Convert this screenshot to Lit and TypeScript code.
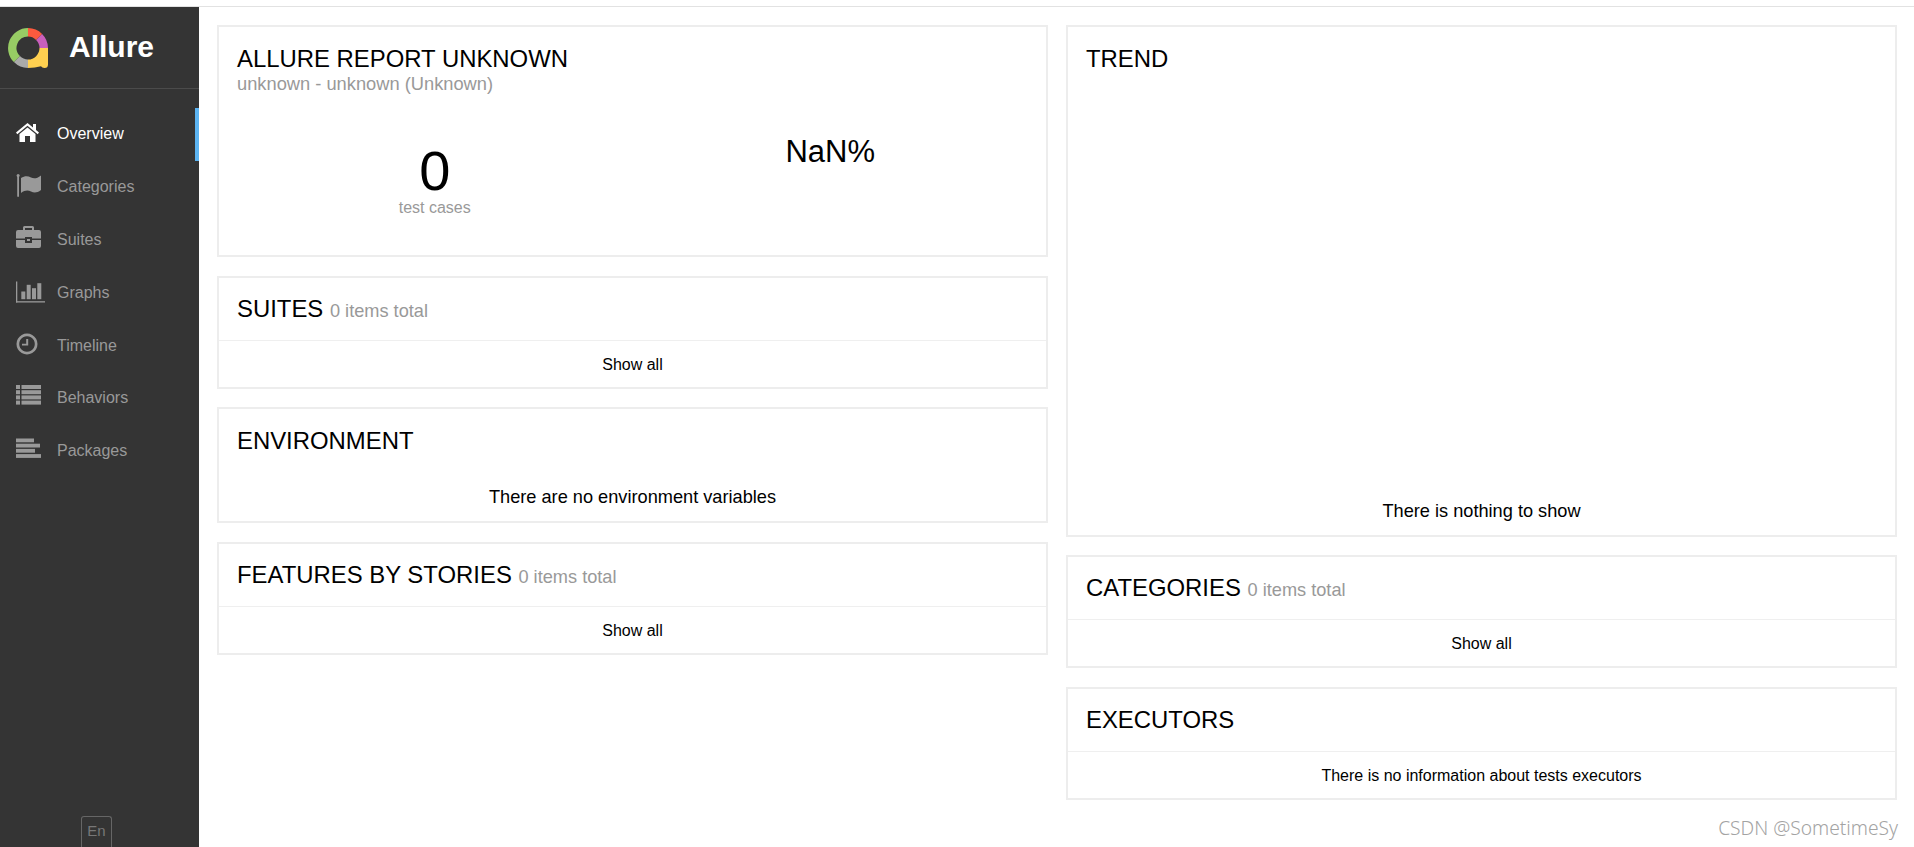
import { LitElement, html, css, svg } from "lit";
import { customElement } from "lit/decorators.js";

const icons: Record<string, unknown> = {
  home: svg`<path d="M11.500 3 L17 7.600 V4 H20 V10.100 L23 12.600 L21.700 14.200 L11.500 5.700 L1.300 14.200 L0 12.600 Z"/><path d="M11.500 7.500 L19.500 14 V22 H14 V16 H9 V22 H3.500 V14 Z"/>`,
  flag: svg`<rect x="1.200" y="2" width="1.800" height="22" rx="0.900"/><circle cx="2.100" cy="2.400" r="1.500"/><path d="M5 5 C9 2.500 12 3 15 4.500 C18 6 21 5.500 25 2.500 V17 C21 20 18 20 15 18.500 C12 17 9 17 5 20 Z"/>`,
  suitcase: svg`<path d="M7 4 V1.500 Q7 0 8.500 0 H16.500 Q18 0 18 1.500 V4 H16 V2 H9 V4 Z"/><path d="M2 4 H23 Q25 4 25 6 V12.500 H16 V11 H9 V12.500 H0 V6 Q0 4 2 4 Z"/><path d="M0 14 H9 V17 H16 V14 H25 V20 Q25 22 23 22 H2 Q0 22 0 20 Z"/><rect x="11" y="13" width="3" height="2"/>`,
  chart: svg`<rect x="0" y="2.500" width="1.300" height="21"/><rect x="0" y="22.200" width="29" height="1.300"/><rect x="5.300" y="12.500" width="4" height="7.700"/><rect x="10.700" y="5.800" width="4" height="14.400"/><rect x="16" y="9.200" width="4" height="11"/><rect x="21.300" y="4.200" width="4" height="16"/>`,
  clock: svg`<path fill-rule="evenodd" d="M11 1.500 A10.500 10.500 0 1 1 10.990 1.500 Z M11 4.200 A7.800 7.800 0 1 0 11.010 4.200 Z"/><path d="M10.200 7 H12.200 V13.600 H6 V11.800 H10.200 Z"/>`,
  list: svg`<rect x="0" y="1" width="4" height="4"/><rect x="5.500" y="1" width="19.500" height="4"/><rect x="0" y="6.200" width="4" height="4"/><rect x="5.500" y="6.200" width="19.500" height="4"/><rect x="0" y="11.400" width="4" height="4"/><rect x="5.500" y="11.400" width="19.500" height="4"/><rect x="0" y="16.600" width="4" height="4"/><rect x="5.500" y="16.600" width="19.500" height="4"/>`,
  align: svg`<rect x="0" y="1.500" width="18" height="3.800"/><rect x="0" y="6.700" width="24" height="3.800"/><rect x="0" y="11.900" width="19" height="3.800"/><rect x="0" y="17.100" width="25" height="3.800"/>`,
};

const nav = [
  ["home", "Overview"],
  ["flag", "Categories"],
  ["suitcase", "Suites"],
  ["chart", "Graphs"],
  ["clock", "Timeline"],
  ["list", "Behaviors"],
  ["align", "Packages"],
];

@customElement("app-root")
export class AppRoot extends LitElement {
  static styles = css`
    :host {
      display: block;
      height: 847px;
      overflow: hidden;
      position: relative;
      font-family: "Liberation Sans", Arial, sans-serif;
      background: #fff;
      color: #000;
    }
    .page {
      display: flex;
      height: 847px;
      box-sizing: border-box;
      padding-top: 6px;
    }
    .frame {
      display: flex;
      flex: 1;
      border-top: 1px solid #e2e2e2;
      min-width: 0;
    }
    .side {
      width: 199px;
      flex: none;
      background: #343434;
      display: flex;
      flex-direction: column;
      height: 840px;
    }
    .brand {
      height: 82px;
      box-sizing: border-box;
      border-bottom: 1px solid #4b4b4b;
      display: flex;
      align-items: center;
      padding-left: 8px;
      gap: 21px;
      color: #fff;
      font-size: 30px;
      font-weight: 700;
      flex: none;
    }
    .brand svg { display: block; }
    .brand span { padding-bottom: 2px; }
    .nav { padding-top: 19px; flex: 1; }
    .item {
      height: 52.800px;
      display: flex;
      align-items: center;
      color: #999;
      font-size: 16px;
      box-sizing: border-box;
      padding-left: 16px;
    }
    .item svg { width: 30px; height: 28px; fill: #999; flex: none; margin-right: 11px; }
    .item.active { color: #fff; border-right: 4px solid #5cb4f2; }
    .item.active svg { fill: #fff; }
    .lang {
      align-self: flex-start;
      margin-left: 81px;
      width: 31px;
      height: 31px;
      box-sizing: border-box;
      border: 1px solid #666;
      border-bottom: none;
      border-radius: 3px 3px 0 0;
      color: #777;
      font-size: 15px;
      padding-bottom: 3px;
      display: flex;
      align-items: center;
      justify-content: center;
      flex: none;
    }
    .main {
      flex: 1;
      display: grid;
      grid-template-columns: 831px 831px;
      column-gap: 18px;
      align-items: start;
      padding: 18px 0 0 18px;
      min-width: 0;
    }
    .col { display: flex; flex-direction: column; gap: 18.700px; }
    .card {
      border: 2px solid #ededed;
      box-sizing: border-box;
      display: flex;
      flex-direction: column;
    }
    .section { height: 113px; }
    .head { padding: 18px 18px 0; height: 64px; box-sizing: border-box; font-size: 23.900px; line-height: 28px; white-space: nowrap; flex: none; }
    .head.rule { border-bottom: 1px solid #efefef; padding-top: 17px; height: 63px; }
    .head.auto { height: auto; }
    .muted { color: #999; font-size: 18.200px; }
    .sub { color: #999; font-size: 18.300px; line-height: 21px; }
    .foot { flex: 1; display: flex; align-items: center; justify-content: center; font-size: 16px; padding-top: 2px; }
    .center18 { text-align: center; font-size: 18.200px; line-height: 24px; }
    .env { height: 115.500px; }
    .env .center18 { padding-top: 12px; }
    .top { height: 232px; }
    .stats { display: grid; grid-template-columns: 1fr 1fr; padding: 33px 18px 0; }
    .stat { text-align: center; }
    .num { font-size: 56px; line-height: 56px; margin-top: 16px; }
    .label { color: #999; font-size: 16px; line-height: 18px; }
    .pct { font-size: 31px; line-height: 38px; padding-top: 6px; }
    .trend { height: 511.700px; }
    .trend .grow { flex: 1; }
    .trend .center18 { height: 36px; }
    .mark {
      position: absolute;
      right: 16px;
      bottom: 8px;
      color: #a3a3a3;
      font-size: 19.200px;
      line-height: 22px;
      font-family: "Noto Sans", "Liberation Sans", sans-serif;
      font-weight: 300;
    }
  `;

  private section(title: string, total: boolean, foot: string) {
    return html`<div class="card section">
      <div class="head rule">${title}${total ? html` <span class="muted">0 items total</span>` : ""}</div>
      <div class="foot">${foot}</div>
    </div>`;
  }

  render() {
    return html`<div class="page"><div class="frame">
      <aside class="side">
        <div class="brand">
          <svg width="40" height="40" viewBox="0 0 40 40">
            <g fill="none" stroke-width="8.500">
              <path d="M20 4.250 A15.750 15.750 0 0 1 31.100 8.900" stroke="#fd5a3e"/>
              <path d="M31.100 8.900 A15.750 15.750 0 0 1 35.750 20" stroke="#c95fbc"/>
              <path d="M20 35.750 A15.750 15.750 0 0 1 8.900 31.100" stroke="#aaaaaa"/>
              <path d="M8.900 31.100 A15.750 15.750 0 0 1 20 4.250" stroke="#97cc64"/>
            </g>
            <path d="M40 20 V36.500 Q40 40 36.500 40 Q34 40 33 38.200 Q27 40 20 40 V31.500 A11.500 11.500 0 0 0 31.500 20 Z" fill="#ffd050"/>
          </svg>
          <span>Allure</span>
        </div>
        <nav class="nav">
          ${nav.map(([ic, label], i) => html`<div class="item ${i === 0 ? "active" : ""}">
            <svg viewBox="0 0 30 28">${icons[ic]}</svg><span>${label}</span>
          </div>`)}
        </nav>
        <div class="lang">En</div>
      </aside>
      <main class="main">
        <div class="col">
          <div class="card top">
            <div class="head auto">ALLURE REPORT UNKNOWN<div class="sub">unknown - unknown (Unknown)</div></div>
            <div class="stats">
              <div class="stat"><div class="num">0</div><div class="label">test cases</div></div>
              <div class="stat"><div class="pct">NaN%</div></div>
            </div>
          </div>
          ${this.section("SUITES", true, "Show all")}
          <div class="card env">
            <div class="head">ENVIRONMENT</div>
            <div class="center18">There are no environment variables</div>
          </div>
          ${this.section("FEATURES BY STORIES", true, "Show all")}
        </div>
        <div class="col">
          <div class="card trend">
            <div class="head">TREND</div>
            <div class="grow"></div>
            <div class="center18">There is nothing to show</div>
          </div>
          ${this.section("CATEGORIES", true, "Show all")}
          ${this.section("EXECUTORS", false, "There is no information about tests executors")}
        </div>
      </main>
    </div></div>
    <div class="mark">CSDN @SometimeSy</div>`;
  }
}
